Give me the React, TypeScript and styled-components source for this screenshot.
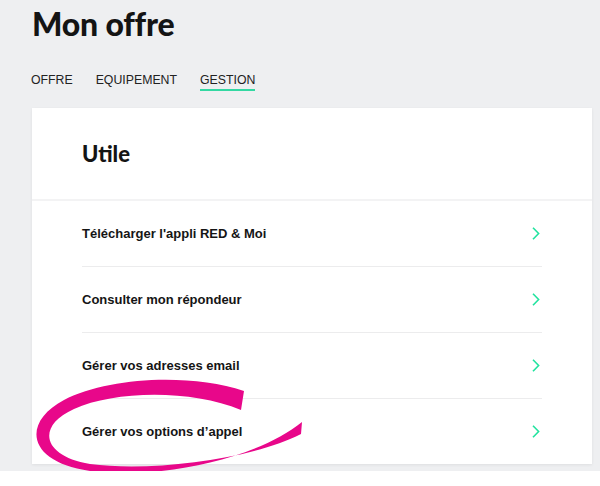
import React from 'react'
import styled, { createGlobalStyle } from 'styled-components'

const GlobalStyle = createGlobalStyle`
  html, body {
    margin: 0;
    padding: 0;
    background: #ffffff;
  }
  * { box-sizing: border-box; }
`

const Page = styled.div`
  position: relative;
  height: 471px;
  background: #eeeff1;
  padding: 0 8px 0 32px;
  overflow: hidden;
`

const Title = styled.h1`
  margin: 0;
  padding-top: 4px;
  height: 60px;
  font-family: Lato, 'Noto Sans', sans-serif;
  font-weight: 900;
  font-size: 32px;
  line-height: 40px;
  letter-spacing: -0.2px;
  color: #141414;
`

const Tabs = styled.nav`
  display: flex;
  gap: 23px;
  height: 48px;
  margin-left: -1px;
`

const Tab = styled.span<{ $active?: boolean }>`
  font-family: 'Liberation Sans', Arial, sans-serif;
  font-size: 12.3px;
  color: #222;
  height: 31px;
  line-height: 40px;
  border-bottom: 2px solid ${({ $active }) => ($active ? '#33d8a2' : 'transparent')};
`

const Card = styled.section`
  background: #fff;
  box-shadow: 0 1px 3px rgba(0, 0, 0, 0.07);
`

const CardHeader = styled.header`
  height: 93px;
  display: flex;
  align-items: center;
  padding: 0 50px 0;
  border-bottom: 2px solid #f3f3f4;
`

const CardTitle = styled.h2`
  margin: 0;
  font-family: Lato, 'Noto Sans', sans-serif;
  font-weight: 900;
  font-size: 22px;
  color: #141414;
`

const List = styled.ul`
  list-style: none;
  margin: 0;
  padding: 0 50px;
`

const Row = styled.li`
  height: 66px;
  display: flex;
  align-items: center;
  justify-content: space-between;
  border-bottom: 1px solid #ececed;
  padding-right: 2px;

  &:last-child {
    border-bottom: none;
    height: 65px;
  }
`

const RowLabel = styled.span`
  font-family: 'Liberation Sans', Arial, sans-serif;
  font-weight: bold;
  font-size: 13px;
  color: #151515;
`

const Scribble = styled.svg`
  position: absolute;
  left: 0;
  top: 0;
  pointer-events: none;
`

const Chevron = () => (
  <svg width="8" height="13" viewBox="0 0 8 13">
    <polyline points="1,0.8 6.6,6.5 1,12.2" fill="none" stroke="#22e39f" strokeWidth="1.6" />
  </svg>
)

const items = [
  "Télécharger l'appli RED & Moi",
  'Consulter mon répondeur',
  'Gérer vos adresses email',
  'Gérer vos options d’appel',
]

export default function App() {
  return (
    <>
      <GlobalStyle />
      <Page>
        <Title>Mon offre</Title>
        <Tabs>
          <Tab>OFFRE</Tab>
          <Tab>EQUIPEMENT</Tab>
          <Tab $active>GESTION</Tab>
        </Tabs>
        <Card>
          <CardHeader>
            <CardTitle>Utile</CardTitle>
          </CardHeader>
          <List>
            {items.map((label) => (
              <Row key={label}>
                <RowLabel>{label}</RowLabel>
                <Chevron />
              </Row>
            ))}
          </List>
        </Card>
        <Scribble width="600" height="486" viewBox="0 0 600 486">
          <path
            d="M 244 391 C 190 373, 108 377, 64 400 C 22 422, 26 462, 90 471 C 152 480, 254 461, 302 422 L 301 434 C 250 460, 150 472, 90 464 C 42 456, 36 426, 74 409 C 114 391, 190 389, 241 410 Z"
            fill="#e8078a"
          />
        </Scribble>
      </Page>
    </>
  )
}
